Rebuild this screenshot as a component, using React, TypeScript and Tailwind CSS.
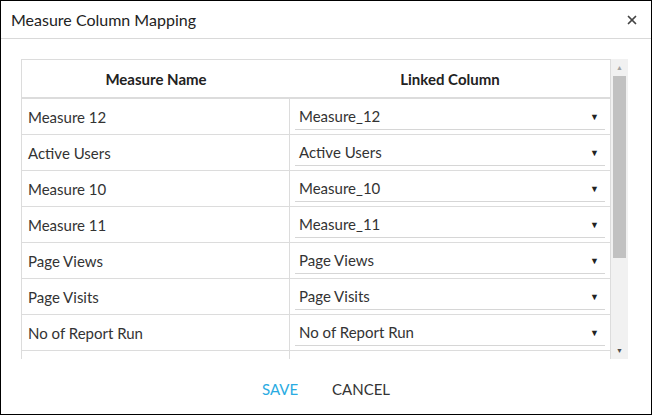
import { X } from 'lucide-react';

const rows = [
  ['Measure 12', 'Measure_12'],
  ['Active Users', 'Active Users'],
  ['Measure 10', 'Measure_10'],
  ['Measure 11', 'Measure_11'],
  ['Page Views', 'Page Views'],
  ['Page Visits', 'Page Visits'],
  ['No of Report Run', 'No of Report Run'],
  ['', ''],
];

function Row({ name, col }: { name: string; col: string }) {
  return (
    <div className="flex h-[36px] shrink-0 border-b border-[#dcdcdc]">
      <div className="w-[268px] flex items-center pl-[6px] pt-[2px] border-r border-[#dcdcdc] text-[15px] text-[#333]">
        {name}
      </div>
      <div className="flex-1 px-[5px] pt-[5px] border-r border-[#dcdcdc]">
        {col && (
          <div className="h-[26px] flex items-center justify-between pl-[4px] pr-[6px] border-b border-[#d6d6d6] text-[15px] text-[#333]">
            <span>{col}</span>
            <span className="text-[9px] text-[#222]">▼</span>
          </div>
        )}
      </div>
    </div>
  );
}

export default function App() {
  return (
    <div
      className="w-[652px] h-[415px] border border-black bg-white flex flex-col"
      style={{ fontFamily: 'Lato, "Open Sans", sans-serif' }}
    >
      {/* Header */}
      <div className="h-[38px] shrink-0 flex items-center justify-between pl-[10px] pr-[12px] border-b border-[#d9d9d9]">
        <span className="text-[16px] text-[#222]">Measure Column Mapping</span>
        <X size={14} strokeWidth={3} className="text-[#444]" />
      </div>

      {/* Table */}
      <div className="pl-[20px] pt-[20px] flex">
        <div className="w-[590px] h-[300px] overflow-hidden flex flex-col border-t border-l border-[#dcdcdc]">
          <div className="flex h-[39px] shrink-0 pt-[2px] border-b-2 border-[#dcdcdc] border-r text-[15px] font-bold text-[#222]">
            <div className="w-[268px] flex items-center justify-center">Measure Name</div>
            <div className="flex-1 flex items-center justify-center">Linked Column</div>
          </div>
          {rows.map((r, i) => (
            <Row key={i} name={r[0]} col={r[1]} />
          ))}
        </div>
        {/* scrollbar */}
        <div className="w-[17px] h-[300px] bg-[#f1f1f1] flex flex-col items-center">
          <div className="h-[17px] flex items-center justify-center text-[7px] text-[#a3a3a3]">▲</div>
          <div className="w-[13px] h-[182px] bg-[#c1c1c1]" />
          <div className="flex-1" />
          <div className="h-[17px] flex items-center justify-center text-[7px] text-[#505050]">▼</div>
        </div>
      </div>

      {/* Footer */}
      <div className="flex-1 flex items-center justify-center gap-[34px] pt-[6px] text-[15px]">
        <button className="text-[#29abe2]">SAVE</button>
        <button className="text-[#333]">CANCEL</button>
      </div>
    </div>
  );
}
